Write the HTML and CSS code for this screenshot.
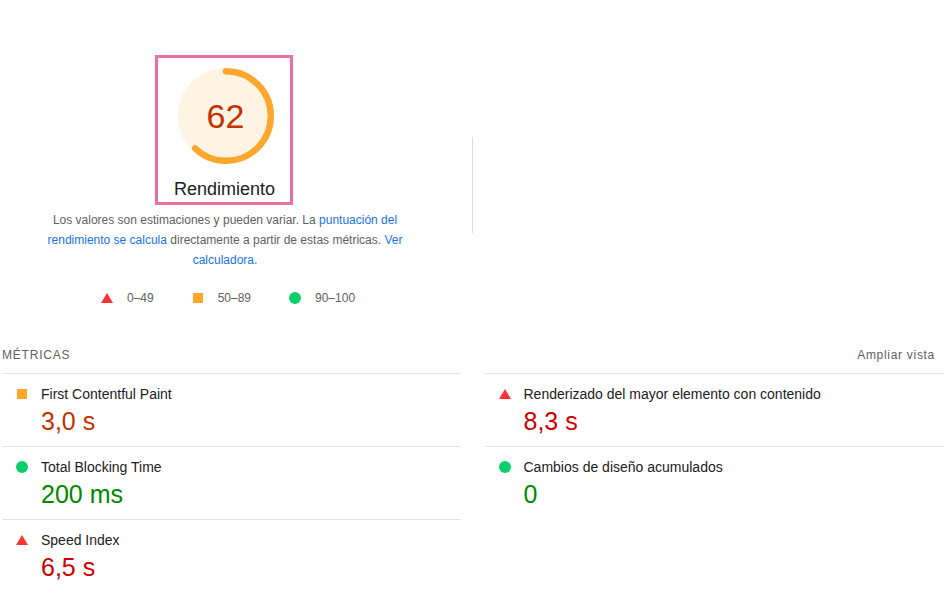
FILE: index.html
```html
<!DOCTYPE html>
<html lang="es">
<head>
<meta charset="utf-8">
<title>Rendimiento</title>
<link rel="stylesheet" href="styles.css">
</head>
<body>
<div class="page">
  <section class="top">
    <div class="score">
      <div class="gauge-box">
        <div class="gauge">
          <svg class="gauge-svg" viewBox="0 0 120 120" width="96" height="96">
            <circle cx="60" cy="60" r="56" fill="#fff3e4" stroke="#fff3e4" stroke-width="8"/>
            <circle cx="60" cy="60" r="56" fill="none" stroke="#ffa72c" stroke-width="8" stroke-linecap="round" stroke-dasharray="218.15 351.86" transform="rotate(-90 60 60)"/>
          </svg>
          <span class="gauge-value">62</span>
        </div>
        <div class="gauge-label">Rendimiento</div>
      </div>
      <p class="desc">Los valores son estimaciones y pueden variar. La <a href="#">puntuación del rendimiento se calcula</a> directamente a partir de estas métricas. <a href="#">Ver calculadora.</a></p>
      <div class="legend">
        <span class="legend-item"><svg class="ic" viewBox="0 0 12 12" width="12" height="12"><polygon points="6,1 12,11 0,11" fill="#ff3333"/></svg>0–49</span>
        <span class="legend-item"><svg class="ic" viewBox="0 0 12 12" width="12" height="12"><rect x="1" y="1" width="10" height="10" fill="#ffa72c"/></svg>50–89</span>
        <span class="legend-item"><svg class="ic" viewBox="0 0 12 12" width="12" height="12"><circle cx="6" cy="6" r="6" fill="#0cce6b"/></svg>90–100</span>
      </div>
    </div>
    <div class="divider"></div>
  </section>

  <section class="metrics">
    <div class="metrics-head">
      <span class="metrics-title">Métricas</span>
      <span class="metrics-toggle">Ampliar vista</span>
    </div>
    <div class="metrics-grid">
      <div class="metric">
        <svg class="ic" viewBox="0 0 12 12" width="12" height="12"><rect x="1" y="1" width="10" height="10" fill="#ffa72c"/></svg>
        <div class="metric-body">
          <div class="metric-title">First Contentful Paint</div>
          <div class="metric-value avg">3,0 s</div>
        </div>
      </div>
      <div class="metric">
        <svg class="ic" viewBox="0 0 12 12" width="12" height="12"><polygon points="6,1 12,11 0,11" fill="#ff3333"/></svg>
        <div class="metric-body">
          <div class="metric-title">Renderizado del mayor elemento con contenido</div>
          <div class="metric-value fail">8,3 s</div>
        </div>
      </div>
      <div class="metric">
        <svg class="ic" viewBox="0 0 12 12" width="12" height="12"><circle cx="6" cy="6" r="6" fill="#0cce6b"/></svg>
        <div class="metric-body">
          <div class="metric-title">Total Blocking Time</div>
          <div class="metric-value pass">200 ms</div>
        </div>
      </div>
      <div class="metric">
        <svg class="ic" viewBox="0 0 12 12" width="12" height="12"><circle cx="6" cy="6" r="6" fill="#0cce6b"/></svg>
        <div class="metric-body">
          <div class="metric-title">Cambios de diseño acumulados</div>
          <div class="metric-value pass">0</div>
        </div>
      </div>
      <div class="metric">
        <svg class="ic" viewBox="0 0 12 12" width="12" height="12"><polygon points="6,1 12,11 0,11" fill="#ff3333"/></svg>
        <div class="metric-body">
          <div class="metric-title">Speed Index</div>
          <div class="metric-value fail">6,5 s</div>
        </div>
      </div>
    </div>
  </section>
</div>
</body>
</html>
```

FILE: styles.css
```css
* { box-sizing: border-box; }

html, body {
  margin: 0;
  padding: 0;
  background: #fff;
}

body {
  font-family: "Liberation Sans", Arial, Helvetica, sans-serif;
  color: #212121;
  overflow: hidden;
}

.page {
  width: 950px;
}

.top {
  display: flex;
  padding-top: 55px;
}

.score {
  width: 450px;
  display: flex;
  flex-direction: column;
  align-items: center;
}

.gauge-box {
  width: 138px;
  height: 150px;
  margin-right: 3px;
  border: 3px solid #ea719d;
  display: flex;
  flex-direction: column;
  align-items: center;
  padding-top: 10px;
  padding-left: 2px;
}

.gauge {
  display: grid;
  width: 96px;
  height: 96px;
  margin-left: 2px;
}

.gauge-svg,
.gauge-value {
  grid-area: 1 / 1;
}

.gauge-value {
  align-self: center;
  justify-self: center;
  font-size: 34px;
  line-height: 40px;
  color: #c33300;
}

.gauge-label {
  margin-top: 14px;
  font-size: 18px;
  line-height: 22px;
  color: #212121;
}

.desc {
  margin: 5px 0 0;
  width: 364px;
  text-align: center;
  font-size: 12px;
  line-height: 20px;
  color: #616161;
}

.desc a {
  color: #1a73e8;
  text-decoration: none;
}

.legend {
  margin-top: 20px;
  margin-left: 6px;
  display: flex;
  gap: 38px;
  font-size: 12px;
  line-height: 16px;
  color: #616161;
}

.legend-item {
  display: flex;
  align-items: center;
}

.legend-item .ic {
  margin-right: 14px;
}

.ic {
  flex: none;
  display: block;
}

.divider {
  width: 1px;
  height: 96px;
  background: #dcdcdc;
  margin-left: 22px;
  margin-top: 82px;
}

.metrics {
  margin: 41px 7px 0 2px;
}

.metrics-head {
  display: flex;
  justify-content: space-between;
  align-items: center;
  padding-right: 8px;
  margin-bottom: 10px;
  font-size: 12px;
  line-height: 16px;
  color: #616161;
}

.metrics-title {
  text-transform: uppercase;
  letter-spacing: 0.8px;
}

.metrics-toggle {
  letter-spacing: 0.7px;
}

.metrics-grid {
  display: grid;
  grid-template-columns: 1fr 1fr;
  column-gap: 24px;
}

.metric {
  border-top: 1px solid #e4e4e4;
  display: flex;
  align-items: flex-start;
  padding: 10px 0 10px 14px;
  height: 73px;
}

.metric .ic {
  margin-top: 4px;
  margin-right: 13px;
}

.metric-title {
  font-size: 14px;
  line-height: 20px;
  color: #212121;
}

.metric-value {
  margin-top: 2px;
  font-size: 25px;
  line-height: 30px;
}

.metric-value.avg { color: #c33300; }
.metric-value.fail { color: #cc0000; }
.metric-value.pass { color: #008800; }
```
